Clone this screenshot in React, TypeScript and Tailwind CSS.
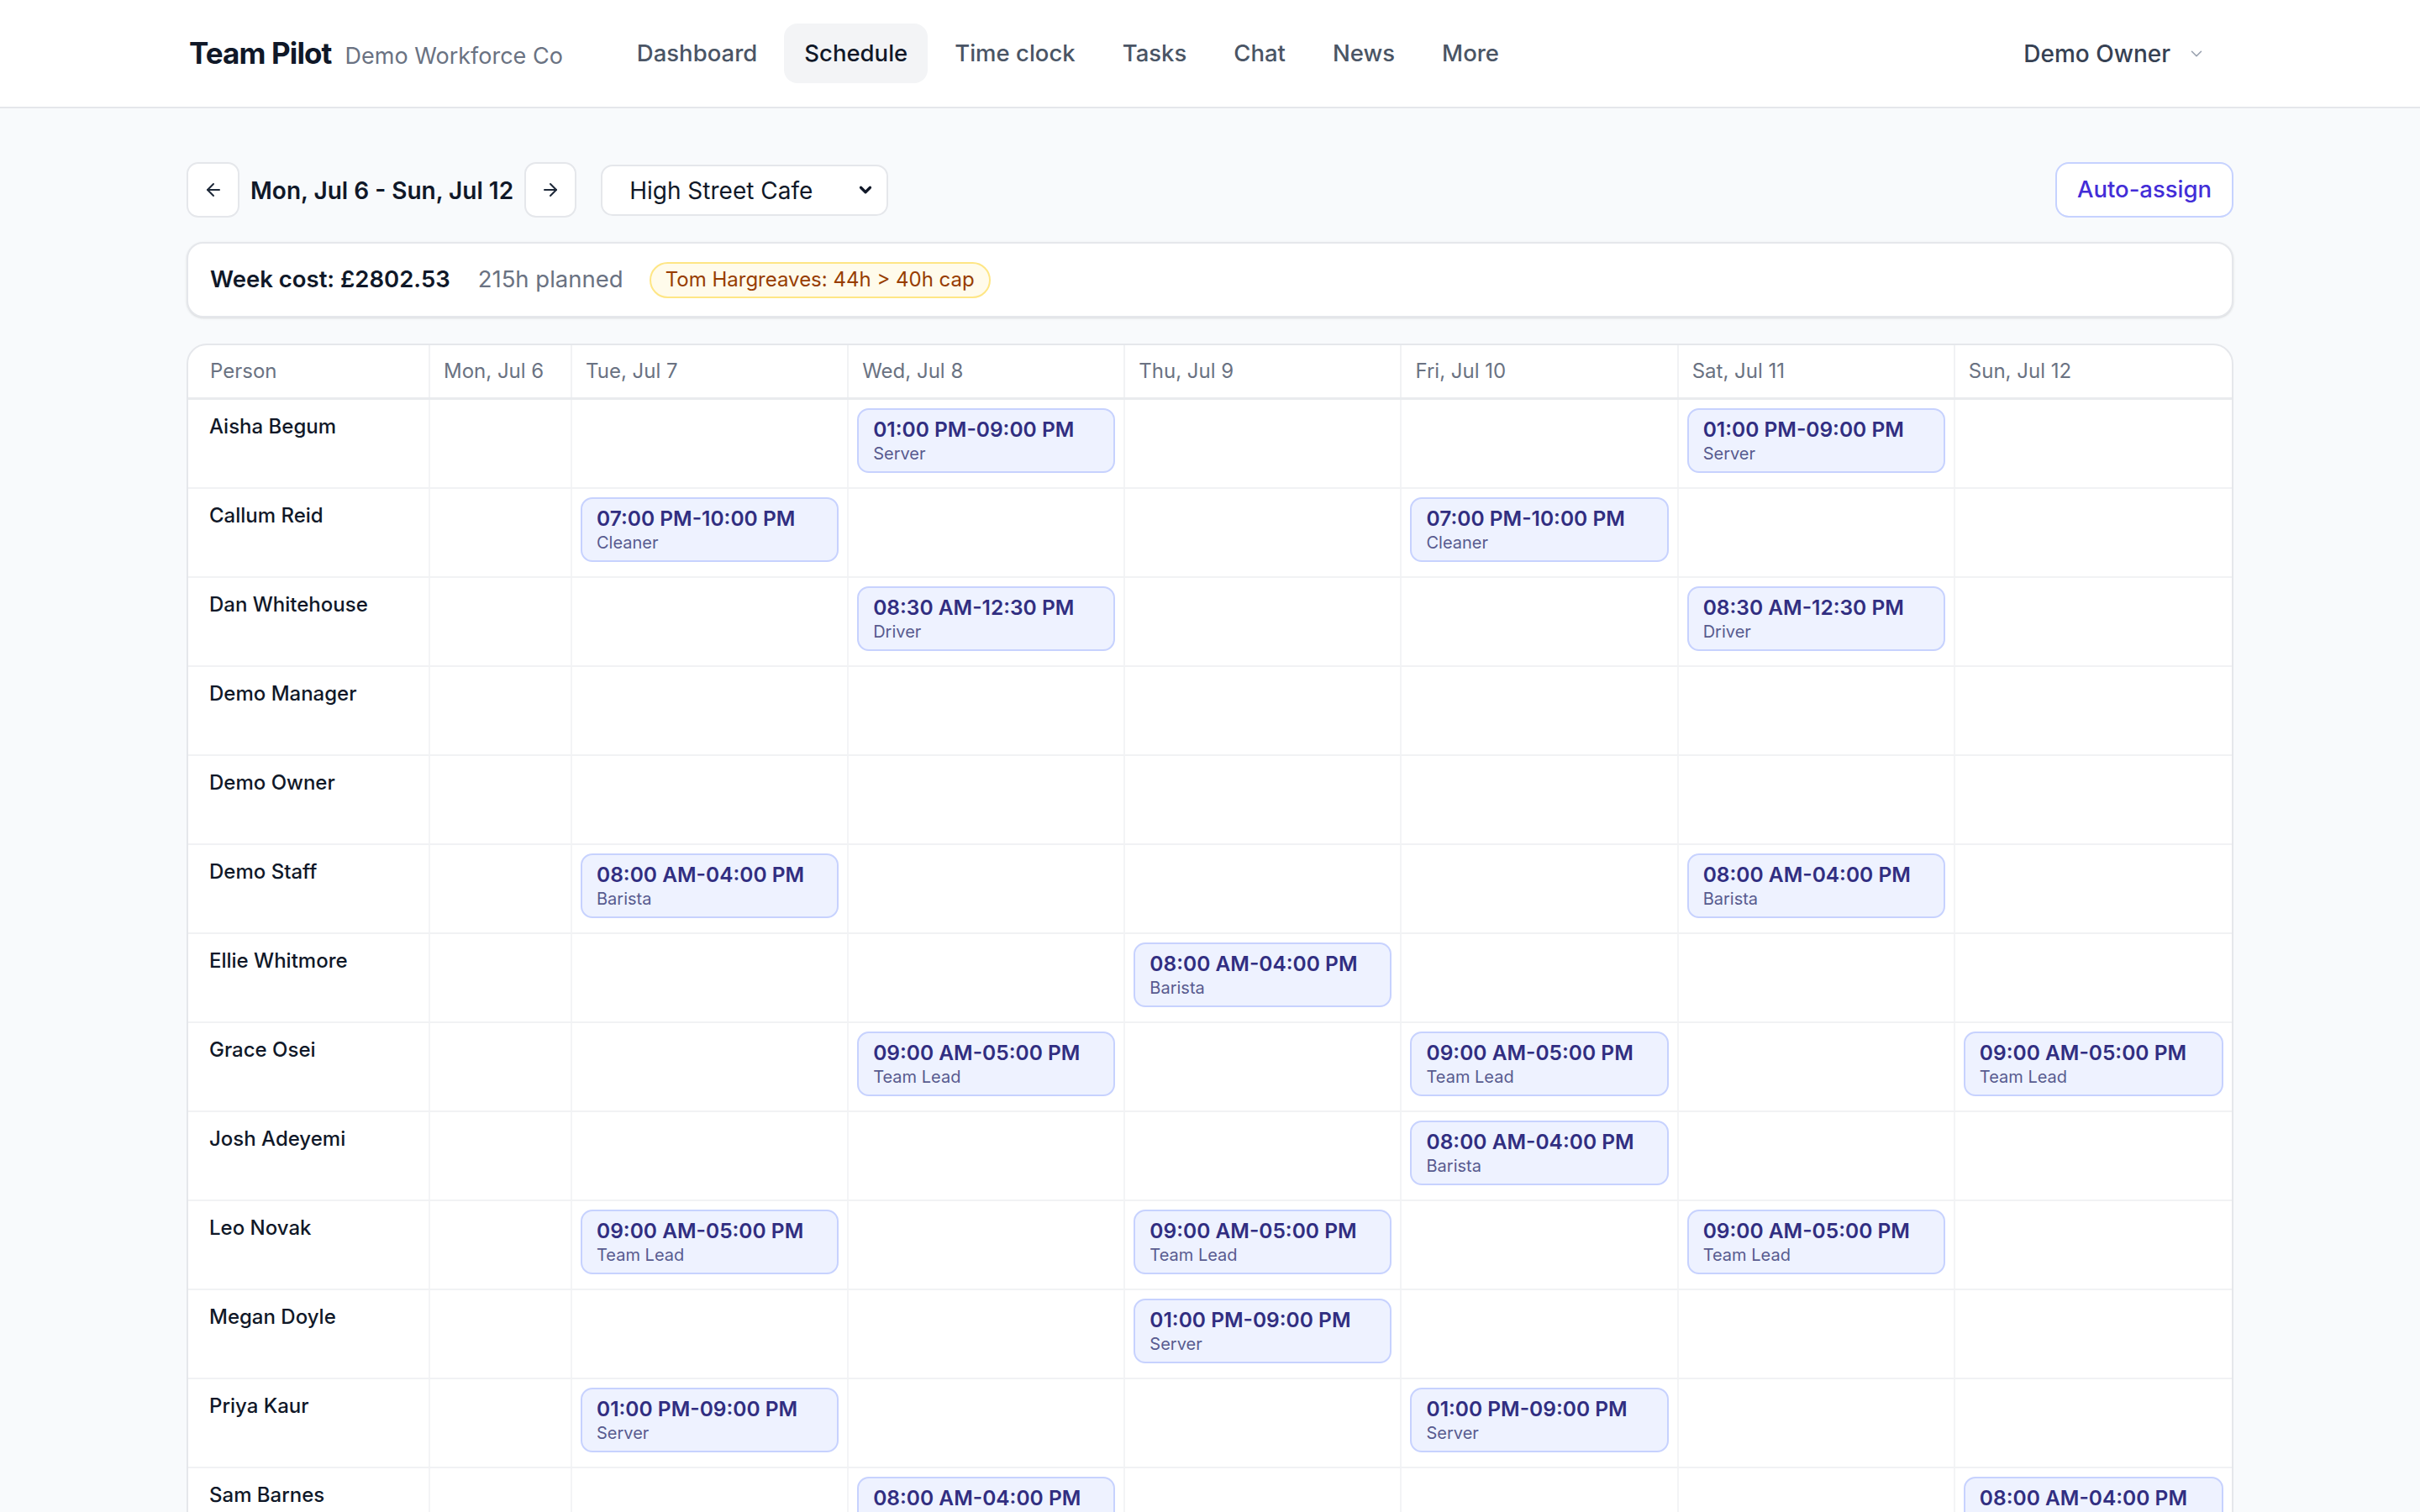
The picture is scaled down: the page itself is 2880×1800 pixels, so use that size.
import { ArrowLeft, ArrowRight, ChevronDown } from 'lucide-react';

type Shift = { time: string; role: string };
type Row = { name: string; shifts: Record<number, Shift> };

// day index: 0 = Mon ... 6 = Sun
const days = ['Mon, Jul 6', 'Tue, Jul 7', 'Wed, Jul 8', 'Thu, Jul 9', 'Fri, Jul 10', 'Sat, Jul 11', 'Sun, Jul 12'];
const navItems = ['Dashboard', 'Schedule', 'Time clock', 'Tasks', 'Chat', 'News', 'More'];

const server = { time: '01:00 PM-09:00 PM', role: 'Server' };
const cleaner = { time: '07:00 PM-10:00 PM', role: 'Cleaner' };
const driver = { time: '08:30 AM-12:30 PM', role: 'Driver' };
const barista = { time: '08:00 AM-04:00 PM', role: 'Barista' };
const lead = { time: '09:00 AM-05:00 PM', role: 'Team Lead' };

const rows: Row[] = [
  { name: 'Aisha Begum', shifts: { 2: server, 5: server } },
  { name: 'Callum Reid', shifts: { 1: cleaner, 4: cleaner } },
  { name: 'Dan Whitehouse', shifts: { 2: driver, 5: driver } },
  { name: 'Demo Manager', shifts: {} },
  { name: 'Demo Owner', shifts: {} },
  { name: 'Demo Staff', shifts: { 1: barista, 5: barista } },
  { name: 'Ellie Whitmore', shifts: { 3: barista } },
  { name: 'Grace Osei', shifts: { 2: lead, 4: lead, 6: lead } },
  { name: 'Josh Adeyemi', shifts: { 4: barista } },
  { name: 'Leo Novak', shifts: { 1: lead, 3: lead, 5: lead } },
  { name: 'Megan Doyle', shifts: { 3: server } },
  { name: 'Priya Kaur', shifts: { 1: server, 4: server } },
  { name: 'Sam Barnes', shifts: { 2: barista, 6: barista } },
  { name: 'Tom Hargreaves', shifts: { 0: lead, 1: lead, 3: lead, 4: lead, 5: barista } },
];

function ShiftCard({ shift }: { shift: Shift }) {
  return (
    <div className="h-[77px] rounded-[14px] border-2 border-[#c7d2fe] bg-[#eef2ff] px-[17px] pt-[8px]">
      <p className="text-[24.5px] leading-[30px] font-semibold text-[#312e81]">{shift.time}</p>
      <p className="mt-[1px] text-[20px] leading-[27px] text-[#585b8f]">{shift.role}</p>
    </div>
  );
}

export default function App() {
  return (
    <div className="min-h-screen bg-[#f8fafc] font-['Inter',sans-serif] text-gray-900">
      <header className="h-[129px] border-b-2 border-gray-200 bg-white">
        <div className="mx-auto flex h-full w-[2436px] items-center pl-[3px]">
          <div className="flex items-baseline gap-[16px]">
            <span className="text-[35px] font-bold tracking-tight text-gray-900">Team Pilot</span>
            <span className="text-[27px] text-gray-500">Demo Workforce Co</span>
          </div>
          <nav className="ml-[64px] flex items-center gap-[8px]">
            {navItems.map((item) => (
              <span
                key={item}
                className={`flex h-[71px] items-center rounded-[16px] px-[24px] text-[27.5px] font-medium ${
                  item === 'Schedule' ? 'bg-gray-100 text-gray-900' : 'text-gray-600'
                }`}
              >
                {item}
              </span>
            ))}
          </nav>
          <div className="ml-auto mr-[33px] flex items-center gap-[20px]">
            <span className="text-[28px] font-medium text-gray-700">Demo Owner</span>
            <ChevronDown size={22} strokeWidth={1.75} className="text-gray-400" />
          </div>
        </div>
      </header>

      <main className="mx-auto w-[2436px] pt-[64px]">
        <div className="flex items-center justify-between">
          <div className="flex items-center">
            <button className="flex h-[66px] w-[63px] items-center justify-center rounded-[14px] border-2 border-gray-200 bg-white">
              <ArrowLeft size={24} strokeWidth={2} className="text-gray-800" />
            </button>
            <span className="mx-[13px] pt-[2px] text-[28px] font-semibold text-gray-900">Mon, Jul 6 - Sun, Jul 12</span>
            <button className="flex h-[66px] w-[62px] items-center justify-center rounded-[14px] border-2 border-gray-200 bg-white">
              <ArrowRight size={24} strokeWidth={2} className="text-gray-800" />
            </button>
            <div className="ml-[29px] flex h-[61px] w-[342px] items-center justify-between rounded-[14px] border-2 border-gray-200 bg-white pl-[32px] pr-[14px]">
              <span className="pt-[2px] text-[28px] text-gray-900">High Street Cafe</span>
              <ChevronDown size={22} strokeWidth={3.5} className="text-gray-900" />
            </div>
          </div>
          <button className="h-[66px] w-[212px] rounded-[16px] border-2 border-indigo-200 bg-white text-[27.5px] font-medium text-indigo-700">
            Auto-assign
          </button>
        </div>

        <div className="mt-[29px] flex h-[90px] items-center rounded-[20px] border-2 border-gray-200 bg-white px-[26px] shadow-sm">
          <span className="text-[27.5px] font-semibold text-gray-900">Week cost: £2802.53</span>
          <span className="ml-[33px] text-[27.5px] text-gray-500">215h planned</span>
          <span className="ml-[31px] flex h-[43px] items-center rounded-full border-2 border-amber-200 bg-amber-50 px-[17px] text-[24px] text-amber-800">
            Tom Hargreaves: 44h &gt; 40h cap
          </span>
        </div>

        <div className="mt-[31px] overflow-hidden rounded-[24px] border-2 border-gray-200 bg-white">
          <div className="grid h-[65px] grid-cols-[288px_169px_repeat(6,minmax(0,1fr))] border-b-[3px] border-[#e9ebee] text-[24px] text-gray-500">
            <div className="flex items-center border-r-2 border-[#f1f2f4] pl-[26px]">Person</div>
            {days.map((d, i) => (
              <div key={d} className={`flex items-center pl-[16px] ${i < 6 ? 'border-r-2 border-[#f1f2f4]' : ''}`}>
                {d}
              </div>
            ))}
          </div>
          {rows.map((row) => (
            <div
              key={row.name}
              className="grid h-[106px] grid-cols-[288px_169px_repeat(6,minmax(0,1fr))] border-b-2 border-[#f1f2f4]"
            >
              <div className="border-r-2 border-[#f3f4f6] pl-[25px] pt-[14px] text-[24px] leading-[36px] font-medium text-gray-900">
                {row.name}
              </div>
              {days.map((d, i) => (
                <div key={d} className={`px-[10px] pt-[10px] ${i < 6 ? 'border-r-2 border-[#f3f4f6]' : ''}`}>
                  {row.shifts[i] && <ShiftCard shift={row.shifts[i]} />}
                </div>
              ))}
            </div>
          ))}
        </div>
      </main>
    </div>
  );
}
